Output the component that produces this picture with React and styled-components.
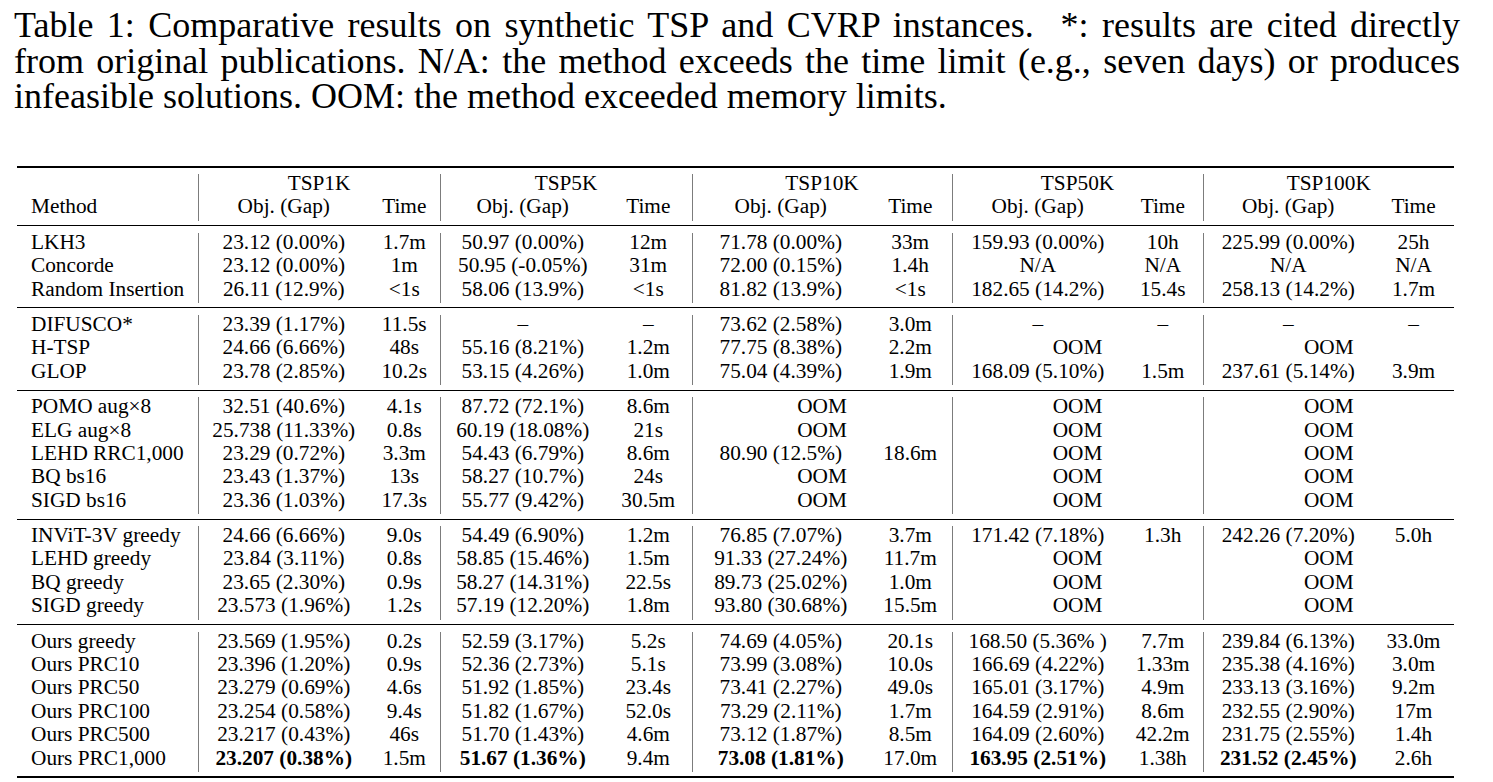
import React from 'react'
import styled, { createGlobalStyle } from 'styled-components'

const GlobalStyle = createGlobalStyle`
    body {
        margin: 0;
        background: #fff;
        color: #000;
        font-family: 'Liberation Serif', 'Times New Roman', serif;
    }
`

const Page = styled.div`
    padding: 8px 0 0 14px;
`

const Caption = styled.div`
    width: 1446px;
    font-size: 36px;
    line-height: 35.5px;
`

const CaptionLine = styled.div`
    text-align: justify;
    text-align-last: ${({ $last }) => ($last ? 'left' : 'justify')};
`

const Table = styled.table`
    margin: 51.5px 0 0 3px;
    width: 1437px;
    border-collapse: collapse;
    table-layout: fixed;
    font-size: 21.3px;
`

const Col = styled.col`
    width: ${({ $w }) => $w}px;
`

const Cell = styled.td`
    padding: 0 0 4.6px;
    line-height: 18.8px;
    text-align: center;
    white-space: nowrap;
    font-weight: ${({ $bold }) => ($bold ? 700 : 400)};
    border-left: ${({ $rule }) => ($rule ? '1px solid #7c7c7c' : 'none')};
`

const MethodCell = styled(Cell)`
    text-align: left;
    padding-left: 14px;
`

const RuleCell = styled.td`
    padding: ${({ $above }) => $above}px 0 ${({ $below }) => $below}px;
`

const Line = styled.div`
    height: ${({ $w }) => $w}px;
    background: #000;
`

const widths = [181, 171, 71, 165, 87, 177, 83, 171, 80, 170, 81]
const sets = ['TSP1K', 'TSP5K', 'TSP10K', 'TSP50K', 'TSP100K']

const groups = [
    [
        ['LKH3', ['23.12 (0.00%)', '1.7m'], ['50.97 (0.00%)', '12m'], ['71.78 (0.00%)', '33m'], ['159.93 (0.00%)', '10h'], ['225.99 (0.00%)', '25h']],
        ['Concorde', ['23.12 (0.00%)', '1m'], ['50.95 (-0.05%)', '31m'], ['72.00 (0.15%)', '1.4h'], ['N/A', 'N/A'], ['N/A', 'N/A']],
        ['Random Insertion', ['26.11 (12.9%)', '<1s'], ['58.06 (13.9%)', '<1s'], ['81.82 (13.9%)', '<1s'], ['182.65 (14.2%)', '15.4s'], ['258.13 (14.2%)', '1.7m']],
    ],
    [
        ['DIFUSCO*', ['23.39 (1.17%)', '11.5s'], ['–', '–'], ['73.62 (2.58%)', '3.0m'], ['–', '–'], ['–', '–']],
        ['H-TSP', ['24.66 (6.66%)', '48s'], ['55.16 (8.21%)', '1.2m'], ['77.75 (8.38%)', '2.2m'], 'OOM', 'OOM'],
        ['GLOP', ['23.78 (2.85%)', '10.2s'], ['53.15 (4.26%)', '1.0m'], ['75.04 (4.39%)', '1.9m'], ['168.09 (5.10%)', '1.5m'], ['237.61 (5.14%)', '3.9m']],
    ],
    [
        ['POMO aug×8', ['32.51 (40.6%)', '4.1s'], ['87.72 (72.1%)', '8.6m'], 'OOM', 'OOM', 'OOM'],
        ['ELG aug×8', ['25.738 (11.33%)', '0.8s'], ['60.19 (18.08%)', '21s'], 'OOM', 'OOM', 'OOM'],
        ['LEHD RRC1,000', ['23.29 (0.72%)', '3.3m'], ['54.43 (6.79%)', '8.6m'], ['80.90 (12.5%)', '18.6m'], 'OOM', 'OOM'],
        ['BQ bs16', ['23.43 (1.37%)', '13s'], ['58.27 (10.7%)', '24s'], 'OOM', 'OOM', 'OOM'],
        ['SIGD bs16', ['23.36 (1.03%)', '17.3s'], ['55.77 (9.42%)', '30.5m'], 'OOM', 'OOM', 'OOM'],
    ],
    [
        ['INViT-3V greedy', ['24.66 (6.66%)', '9.0s'], ['54.49 (6.90%)', '1.2m'], ['76.85 (7.07%)', '3.7m'], ['171.42 (7.18%)', '1.3h'], ['242.26 (7.20%)', '5.0h']],
        ['LEHD greedy', ['23.84 (3.11%)', '0.8s'], ['58.85 (15.46%)', '1.5m'], ['91.33 (27.24%)', '11.7m'], 'OOM', 'OOM'],
        ['BQ greedy', ['23.65 (2.30%)', '0.9s'], ['58.27 (14.31%)', '22.5s'], ['89.73 (25.02%)', '1.0m'], 'OOM', 'OOM'],
        ['SIGD greedy', ['23.573 (1.96%)', '1.2s'], ['57.19 (12.20%)', '1.8m'], ['93.80 (30.68%)', '15.5m'], 'OOM', 'OOM'],
    ],
    [
        ['Ours greedy', ['23.569 (1.95%)', '0.2s'], ['52.59 (3.17%)', '5.2s'], ['74.69 (4.05%)', '20.1s'], ['168.50 (5.36% )', '7.7m'], ['239.84 (6.13%)', '33.0m']],
        ['Ours PRC10', ['23.396 (1.20%)', '0.9s'], ['52.36 (2.73%)', '5.1s'], ['73.99 (3.08%)', '10.0s'], ['166.69 (4.22%)', '1.33m'], ['235.38 (4.16%)', '3.0m']],
        ['Ours PRC50', ['23.279 (0.69%)', '4.6s'], ['51.92 (1.85%)', '23.4s'], ['73.41 (2.27%)', '49.0s'], ['165.01 (3.17%)', '4.9m'], ['233.13 (3.16%)', '9.2m']],
        ['Ours PRC100', ['23.254 (0.58%)', '9.4s'], ['51.82 (1.67%)', '52.0s'], ['73.29 (2.11%)', '1.7m'], ['164.59 (2.91%)', '8.6m'], ['232.55 (2.90%)', '17m']],
        ['Ours PRC500', ['23.217 (0.43%)', '46s'], ['51.70 (1.43%)', '4.6m'], ['73.12 (1.87%)', '8.5m'], ['164.09 (2.60%)', '42.2m'], ['231.75 (2.55%)', '1.4h']],
        ['Ours PRC1,000', ['23.207 (0.38%)', '1.5m'], ['51.67 (1.36%)', '9.4m'], ['73.08 (1.81%)', '17.0m'], ['163.95 (2.51%)', '1.38h'], ['231.52 (2.45%)', '2.6h'], true],
    ],
]

const Rule = ({ above = 4.5, below = 6.5, weight = 1 }) => (
    <tr>
        <RuleCell colSpan={11} $above={above} $below={below}>
            <Line $w={weight} />
        </RuleCell>
    </tr>
)

const DataRow = ({ row }) => {
    const [method, ...rest] = row
    const best = rest[rest.length - 1] === true
    const cells = best ? rest.slice(0, -1) : rest
    return (
        <tr>
            <MethodCell>{method}</MethodCell>
            {cells.map((c, i) =>
                typeof c === 'string' ? (
                    <Cell key={i} colSpan={2} $rule>
                        {c}
                    </Cell>
                ) : (
                    <React.Fragment key={i}>
                        <Cell $rule $bold={best}>
                            {c[0]}
                        </Cell>
                        <Cell>{c[1]}</Cell>
                    </React.Fragment>
                ),
            )}
        </tr>
    )
}

export default function App() {
    return (
        <Page>
            <GlobalStyle />
            <Caption>
                <CaptionLine>
                    Table 1: Comparative results on synthetic TSP and CVRP
                    instances. &nbsp;*: results are cited directly
                </CaptionLine>
                <CaptionLine>
                    from original publications. N/A: the method exceeds the
                    time limit (e.g., seven days) or produces
                </CaptionLine>
                <CaptionLine $last>
                    infeasible solutions. OOM: the method exceeded memory
                    limits.
                </CaptionLine>
            </Caption>
            <Table>
                <colgroup>
                    {widths.map((w, i) => (
                        <Col key={i} $w={w} />
                    ))}
                </colgroup>
                <tbody>
                    <Rule above={0} below={6} weight={2} />
                    <tr>
                        <MethodCell />
                        {sets.map(s => (
                            <Cell key={s} colSpan={2} $rule>
                                {s}
                            </Cell>
                        ))}
                    </tr>
                    <tr>
                        <MethodCell>Method</MethodCell>
                        {sets.map(s => (
                            <React.Fragment key={s}>
                                <Cell $rule>Obj. (Gap)</Cell>
                                <Cell>Time</Cell>
                            </React.Fragment>
                        ))}
                    </tr>
                    {groups.map((g, gi) => (
                        <React.Fragment key={gi}>
                            <Rule />
                            {g.map(r => (
                                <DataRow key={r[0]} row={r} />
                            ))}
                        </React.Fragment>
                    ))}
                    <Rule below={0} weight={2} />
                </tbody>
            </Table>
        </Page>
    )
}
